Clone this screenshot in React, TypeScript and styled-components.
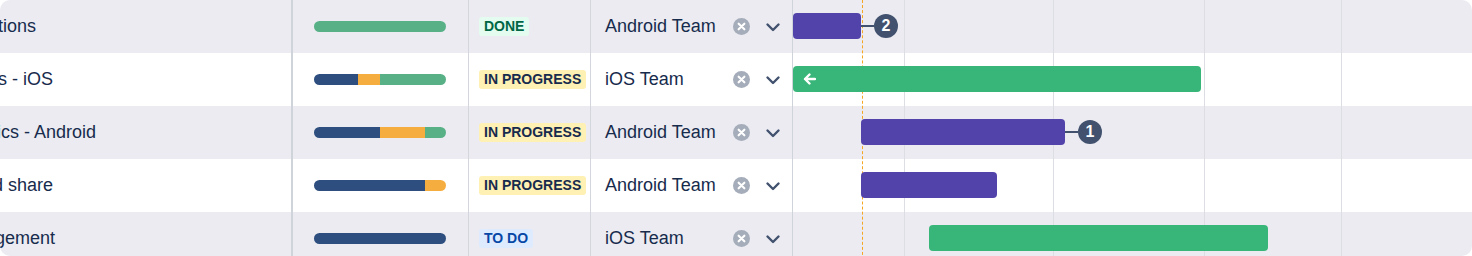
import styled, { createGlobalStyle } from "styled-components";

const GlobalStyle = createGlobalStyle`
    body {
        margin: 0;
        background: #ffffff;
        font-family: "Liberation Sans", Arial, sans-serif;
        color: #172b4d;
    }
`;

const Frame = styled.div`
    width: 1472px;
    height: 256px;
    border-radius: 10px;
    overflow: hidden;
`;

const Table = styled.div`
    position: relative;
    margin-left: -136px;
    width: calc(100% + 136px);
`;

const Row = styled.div<{ $striped: boolean }>`
    display: grid;
    grid-template-columns: 429px 176px 122px 202px 1fr;
    height: 53px;
    background: ${(props) => (props.$striped ? "#ebebf1" : "#ffffff")};
`;

const Cell = styled.div`
    display: flex;
    align-items: center;
    box-sizing: border-box;
    border-right: 1px solid #d3d6dd;
    min-width: 0;
`;

const TitleCell = styled(Cell)`
    padding-left: 16px;
    border-right: 2px solid #cfd3da;
    font-size: 18px;
    white-space: nowrap;
    overflow: hidden;
`;

const ProgressCell = styled(Cell)`
    padding-left: 21px;
`;

const Progress = styled.div`
    display: flex;
    width: 132px;
    height: 11px;
    border-radius: 6px;
    overflow: hidden;
`;

const Segment = styled.div<{ $color: string; $size: number }>`
    flex: ${(props) => props.$size} 0 0;
    background: ${(props) => props.$color};
`;

const StatusCell = styled(Cell)`
    padding-left: 10px;
`;

const lozengeColors = {
    done: { bg: "#e3fcef", fg: "#006644" },
    progress: { bg: "#fff0b3", fg: "#172b4d" },
    todo: { bg: "#deebff", fg: "#0747a6" },
};

type StatusKind = keyof typeof lozengeColors;

const Lozenge = styled.span<{ $kind: StatusKind }>`
    display: inline-block;
    padding: 0 5px;
    height: 19px;
    line-height: 19px;
    border-radius: 3px;
    font-size: 14px;
    font-weight: 700;
    text-transform: uppercase;
    white-space: nowrap;
    background: ${(props) => lozengeColors[props.$kind].bg};
    color: ${(props) => lozengeColors[props.$kind].fg};
`;

const TeamCell = styled(Cell)`
    padding: 0 11px 0 14px;
    border-right: 1px solid #cfd3da;
`;

const TeamName = styled.span`
    flex: 1;
    font-size: 18px;
    white-space: nowrap;
`;

const IconGroup = styled.div`
    display: flex;
    align-items: center;
    gap: 15px;
`;

const TimelineCell = styled.div`
    position: relative;
`;

const Bar = styled.div<{ $left: number; $width: number; $color: string }>`
    position: absolute;
    z-index: 2;
    top: 13px;
    left: ${(props) => props.$left}px;
    width: ${(props) => props.$width}px;
    height: 26px;
    border-radius: 4px;
    background: ${(props) => props.$color};
    display: flex;
    align-items: center;
`;

const BarArrow = styled.svg`
    margin-left: 10px;
`;

const Badge = styled.div`
    position: absolute;
    left: 100%;
    top: 50%;
    transform: translateY(-50%);
    display: flex;
    align-items: center;
`;

const Connector = styled.div`
    width: 13px;
    height: 2px;
    background: #42526e;
`;

const BadgeCircle = styled.div`
    width: 24px;
    height: 24px;
    border-radius: 50%;
    background: #42526e;
    color: #ffffff;
    font-size: 16px;
    font-weight: 700;
    display: flex;
    align-items: center;
    justify-content: center;
`;

const Overlay = styled.div`
    position: absolute;
    top: 0;
    bottom: 0;
    left: 929px;
    right: 0;
    pointer-events: none;
`;

const GridLine = styled.div<{ $left: number }>`
    position: absolute;
    top: 0;
    bottom: 0;
    left: ${(props) => props.$left}px;
    width: 1px;
    background: #dcdee4;
`;

const TodayLine = styled.div<{ $left: number }>`
    position: absolute;
    z-index: 1;
    top: 0;
    bottom: 0;
    left: ${(props) => props.$left}px;
    border-left: 1px dashed #f5a623;
`;

const GREEN = "#57b086";
const ORANGE = "#f6ad3f";
const BLUE = "#2d4e7e";

interface Issue {
    title: string;
    progress: [number, number, number];
    status: StatusKind;
    statusText: string;
    team: string;
    bar: { left: number; width: number; color: string; arrow?: boolean; badge?: number };
}

const issues: Issue[] = [
    { title: "Enable notifications", progress: [0, 0, 132], status: "done", statusText: "Done", team: "Android Team",
        bar: { left: 0, width: 68, color: "#5243aa", badge: 2 } },
    { title: "Usage analytics - iOS", progress: [44, 22, 66], status: "progress", statusText: "In progress", team: "iOS Team",
        bar: { left: 0, width: 408, color: "#38b578", arrow: true } },
    { title: "Session analytics - Android", progress: [66, 45, 21], status: "progress", statusText: "In progress", team: "Android Team",
        bar: { left: 68, width: 204, color: "#5243aa", badge: 1 } },
    { title: "File upload and share", progress: [111, 21, 0], status: "progress", statusText: "In progress", team: "Android Team",
        bar: { left: 68, width: 136, color: "#5243aa" } },
    { title: "Account management", progress: [132, 0, 0], status: "todo", statusText: "To do", team: "iOS Team",
        bar: { left: 136, width: 339, color: "#38b578" } },
];

const gridLines = [111, 260, 411, 548];

function ClearIcon() {
    return (
        <svg width="17" height="17" viewBox="0 0 16 16">
            <circle cx="8" cy="8" r="8" fill="#a5adba" />
            <path d="M5.3 5.3l5.4 5.4M10.7 5.3l-5.4 5.4" stroke="#ffffff" strokeWidth="2" strokeLinecap="round" />
        </svg>
    );
}

function Chevron() {
    return (
        <svg width="16" height="16" viewBox="0 0 16 16">
            <path d="M2.5 5.5L8 11l5.5-5.5" fill="none" stroke="#42526e" strokeWidth="2.4" strokeLinecap="round" strokeLinejoin="round" />
        </svg>
    );
}

function App() {
    return (
        <>
            <GlobalStyle />
            <Frame>
                <Table>
                    {issues.map((issue, i) => (
                        <Row key={issue.title} $striped={i % 2 === 0}>
                            <TitleCell>{issue.title}</TitleCell>
                            <ProgressCell>
                                <Progress>
                                    <Segment $color={BLUE} $size={issue.progress[0]} />
                                    <Segment $color={ORANGE} $size={issue.progress[1]} />
                                    <Segment $color={GREEN} $size={issue.progress[2]} />
                                </Progress>
                            </ProgressCell>
                            <StatusCell>
                                <Lozenge $kind={issue.status}>{issue.statusText}</Lozenge>
                            </StatusCell>
                            <TeamCell>
                                <TeamName>{issue.team}</TeamName>
                                <IconGroup>
                                    <ClearIcon />
                                    <Chevron />
                                </IconGroup>
                            </TeamCell>
                            <TimelineCell>
                                <Bar $left={issue.bar.left} $width={issue.bar.width} $color={issue.bar.color}>
                                    {issue.bar.arrow && (
                                        <BarArrow width="13" height="12" viewBox="0 0 13 12">
                                            <path d="M12 6H2M6.5 1.5L2 6l4.5 4.5" fill="none" stroke="#ffffff" strokeWidth="2.4" strokeLinecap="round" strokeLinejoin="round" />
                                        </BarArrow>
                                    )}
                                    {issue.bar.badge && (
                                        <Badge>
                                            <Connector />
                                            <BadgeCircle>{issue.bar.badge}</BadgeCircle>
                                        </Badge>
                                    )}
                                </Bar>
                            </TimelineCell>
                        </Row>
                    ))}
                    <Overlay>
                        {gridLines.map((x) => (
                            <GridLine key={x} $left={x} />
                        ))}
                        <TodayLine $left={69} />
                    </Overlay>
                </Table>
            </Frame>
        </>
    );
}

export default App;
